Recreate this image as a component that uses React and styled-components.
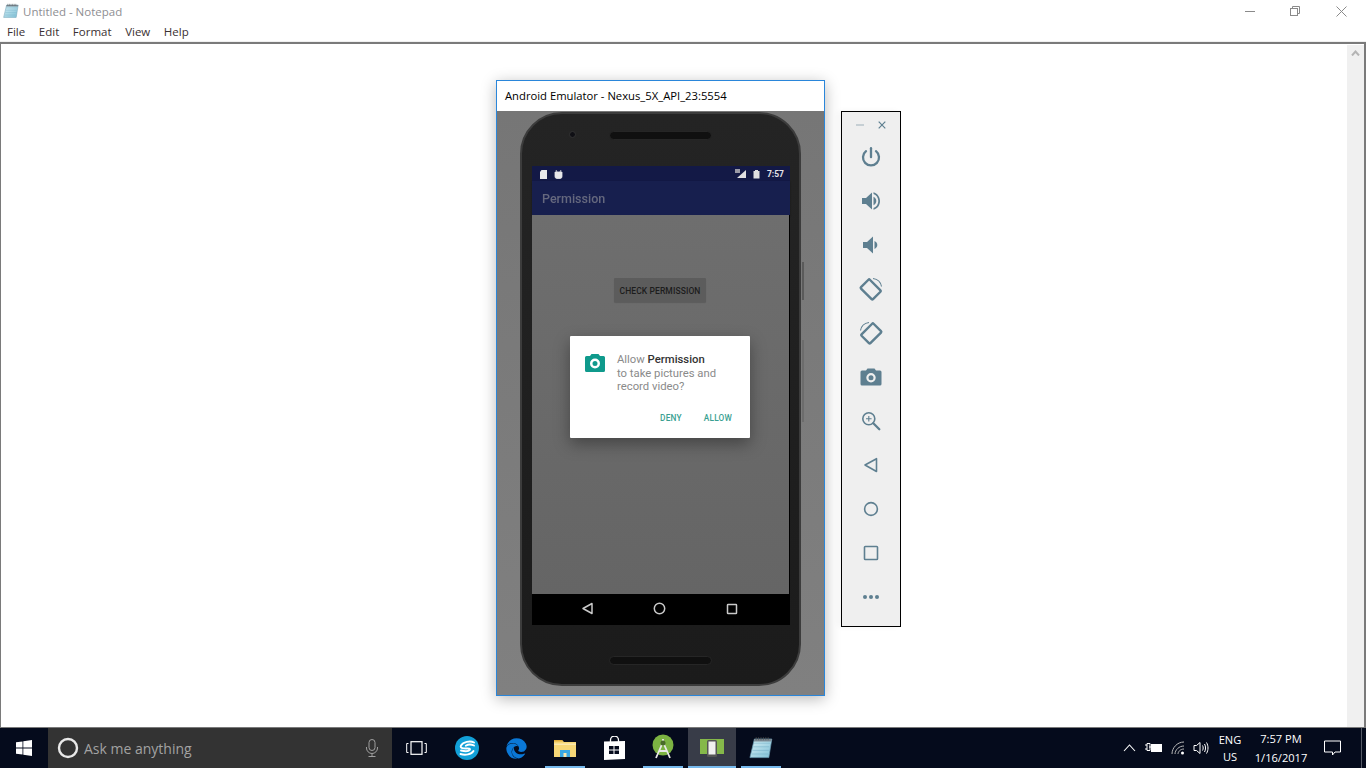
import React from 'react';
import styled, { createGlobalStyle } from 'styled-components';
import { FaEdge } from 'react-icons/fa';

const Global = createGlobalStyle`
  html, body { margin: 0; padding: 0; background: #fff; overflow: hidden; }
  * { box-sizing: border-box; }
  #root { width: 1366px; height: 768px; }
`;

const Page = styled.div`
  width: 1366px; height: 768px; display: flex; flex-direction: column;
  font-family: "Open Sans", "Noto Sans", sans-serif; background: #fff; overflow: hidden;
`;
const TitleBar = styled.div`
  height: 22px; display: flex; align-items: center; padding-left: 3px; flex: none;
`;
const TitleText = styled.span`
  font-size: 11.5px; color: #8e8e92; margin-left: 4px; line-height: 22px; position: relative; top: 1px;
`;
const WindowButtons = styled.div`margin-left: auto; display: flex; align-items: center; height: 22px;`;
const WinBtn = styled.div`
  width: ${p => p.$w}px; height: 22px; display: flex; align-items: center; justify-content: center;
`;
const MenuBar = styled.div`
  height: 19px; display: flex; flex: none; padding-left: 7px; gap: 13.6px; align-items: center;
  font-size: 11.5px; color: #3a3032; background: #fff;
`;
const Gap = styled.div`height: 1px; background: #f0f0f0; flex: none;`;
const Editor = styled.div`
  flex: 1; position: relative; border: 1px solid #7a7a7a; border-top-width: 2px;
  border-right: 2px solid #7a7a7a; display: flex; justify-content: flex-end;
`;
const Scroll = styled.div`
  width: 17px; background: #f0f0f0; display: flex; justify-content: center; padding-top: 5px; margin-top: 1px;
`;

const EmuWindow = styled.div`
  position: absolute; left: 495px; top: 36px; width: 329px; height: 616px; border: 1px solid #2a86da;
  display: flex; flex-direction: column; background: #fff;
  box-shadow: 0 3px 14px rgba(0,0,0,.28);
`;
const EmuTitle = styled.div`
  height: 30px; flex: none; padding: 0 0 2px 8px; display: flex; align-items: center;
  font-size: 11.25px; color: #000;
`;
const EmuBody = styled.div`
  flex: 1; background: linear-gradient(180deg,#767676,#808080); display: flex; justify-content: center; padding: 1px 0 9px 0;
`;
const Phone = styled.div`
  position: relative; width: 281px; height: 574px; margin-left: -1px; border-radius: 42px;
  border: 2px solid #3c3c3c; display: flex; flex-direction: column; align-items: center;
  background: linear-gradient(180deg,#242424,#1b1b1b);
  filter: blur(.3px);
`;
const SideKey = styled.div`
  position: absolute; right: -5px; width: 2px; background: ${p => p.$c}; top: ${p => p.$top}px; height: ${p => p.$h}px;
`;
const Camera = styled.div`
  position: absolute; left: 47px; top: 17px; width: 7px; height: 7px; border-radius: 50%; background: #0f0f14; border: 1px solid #333;
`;
const Speaker = styled.div`
  height: 9px; width: 103px; border-radius: 5px; background: #101010; border: 1px solid #262626; flex: none;
  margin: ${p => p.$m};
`;
const Screen = styled.div`
  width: 258px; height: 459px; flex: none; display: flex; flex-direction: column; position: relative;
  margin-left: 2px;
  font-family: Roboto, sans-serif; background: #000;
`;
const StatusBar = styled.div`
  height: 15px; flex: none; background: #131946; display: flex; align-items: center; padding: 0 6px 0 7px; gap: 6px;
`;
const Clock = styled.span`
  font-size: 8.5px; font-weight: 700; color: #e4e4e8; margin-left: 1px;
`;
const Spacer = styled.div`flex: 1;`;
const AppBar = styled.div`
  height: 34px; flex: none; background: #171f4e; display: flex; align-items: center; padding-left: 10px;
  font-size: 12.5px; font-weight: 500; color: #65687e; box-shadow: 0 1px 2px rgba(0,0,0,.35); position: relative;
`;
const Content = styled.div`
  flex: 1; background: linear-gradient(180deg,#6e6e6e,#656565); display: flex; justify-content: center; align-items: flex-start;
  padding-top: 63px; position: relative; margin-right: 1px;
`;
const CheckBtn = styled.div`
  width: 92px; height: 24px; margin-left: -1px; padding-top: 1px; background: #5c5c5c; border-radius: 1px; display: flex; align-items: center; justify-content: center;
  font-size: 8.5px; font-weight: 500; color: #1d1d1d; letter-spacing: 0.1px; box-shadow: 0 1px 1px rgba(0,0,0,.15);
`;
const Dialog = styled.div`
  position: absolute; left: 38px; top: 121px; width: 180px; height: 102px; background: #fff; border-radius: 1px;
  box-shadow: 0 6px 16px rgba(0,0,0,.35); padding: 18px 0 0 15px; display: flex; flex-direction: column;
`;
const DialogRow = styled.div`display: flex; gap: 12px;`;
const DialogText = styled.div`
  font-size: 11.3px; line-height: 13.5px; color: #8a8a8a; margin-top: -1px;
  strong { font-weight: 500; color: #333; }
`;
const DialogActions = styled.div`
  display: flex; justify-content: flex-end; gap: 22px; padding-right: 18px; margin-top: 19px;
  font-size: 8.3px; font-weight: 500; color: #3a9f92; letter-spacing: 0.2px;
`;
const NavBar = styled.div`
  height: 31px; flex: none; background: #000; display: flex; align-items: center; justify-content: center; padding: 0 3px 2px 0;
`;
const NavBtn = styled.div`width: 72px; display: flex; justify-content: center; align-items: center;`;

const Tools = styled.div`
  position: absolute; left: 840px; top: 67px; width: 60px; height: 516px; border: 1px solid #000; background: #efefef;
  display: flex; flex-direction: column; align-items: center;
  box-shadow: -3px 0 6px rgba(0,0,0,.04);
`;
const ToolsHead = styled.div`
  height: 23px; width: 100%; flex: none; display: flex; align-items: center; justify-content: flex-end; gap: 14px; padding: 3px 14px 0 0;
`;
const ToolBtn = styled.div`
  width: 44px; height: 44px; flex: none; display: flex; align-items: center; justify-content: center;
`;

const Taskbar = styled.div`
  height: 40px; flex: none; background: #050b1c; display: flex; align-items: stretch; color: #fff;
`;
const Start = styled.div`width: 48px; display: flex; align-items: center; justify-content: center; flex: none;`;
const Search = styled.div`
  width: 344px; background: #333; display: flex; align-items: center; padding-left: 9px; flex: none;
`;
const SearchText = styled.span`
  font-size: 14px; color: #a2a2a2; margin-left: 5px;
`;
const MicSlot = styled.div`margin-left: auto; margin-right: 13px; display: flex;`;
const TaskView = styled.div`width: 48px; margin-right: 3px; display: flex; align-items: center; justify-content: center; flex: none;`;
const TaskApp = styled.div`
  width: 48px; margin-right: 1px; flex: none; position: relative; display: flex; align-items: center; justify-content: center;
  background: ${p => (p.$active ? '#383c48' : 'transparent')};
  ${p => p.$open && `&:after { content: ''; position: absolute; bottom: 0; height: 2px; left: ${p.$active ? 0 : 4}px; right: ${p.$active ? 0 : 4}px; background: #76b9ed; }`}
`;
const Tray = styled.div`margin-left: auto; display: flex; align-items: center; padding-right: 11px; border-right: 1px solid #555a66; margin-right: 4px; height: 100%;`;
const TrayIcon = styled.div`width: ${p => p.$w}px; flex: none; display: flex; justify-content: center; align-items: center;`;
const Stack = styled.div`
  width: ${p => p.$w}px; flex: none; display: flex; flex-direction: column; align-items: center; font-size: 11.1px; line-height: ${p => p.$lh}px; color: #fff; white-space: nowrap;
`;

const NotepadIcon = ({ s = 16 }) => (
  <svg width={s} height={s} viewBox="0 0 20 20">
    <defs>
      <linearGradient id="npg" x1="0" y1="0" x2="1" y2="1">
        <stop offset="0" stopColor="#d8f0f6" />
        <stop offset="1" stopColor="#7fc0d6" />
      </linearGradient>
    </defs>
    <path d="M4.500 2.500H19l-2.500 15.500H.8z" fill="url(#npg)" stroke="#6a9cb2" strokeWidth=".6" />
    <path d="M4 6h13.500M3.500 9h13.500M3 12h13.500M2.500 15h13.500" stroke="#6ba8c2" strokeWidth=".4" />
    <path d="M4.500 2.500H19l-.4 2H4.100z" fill="#7b8a94" />
    <path d="M6 1v2.500M8 1v2.500M10 1v2.500M12 1v2.500M14 1v2.500M16 1v2.500" stroke="#555" strokeWidth=".6" />
  </svg>
);

const Gray = '#5e7f90';

const ICONS = [
  <svg key="p" width="24" height="24" viewBox="0 0 24 24" fill="none" stroke={Gray} strokeWidth="2.300" strokeLinecap="round"><path d="M12 3.200v9" /><path d="M7 6.200a8 8 0 1 0 10 0" /></svg>,
  <svg key="vu" width="24" height="24" viewBox="0 0 24 24" fill={Gray}><path d="M3 9v6h4l6 5.500V3.500L7 9z" /><path d="M14.500 7.800c1.700.8 2.800 2.300 2.800 4.200s-1.100 3.400-2.800 4.200zM14.500 3.200c3.800 1 6.500 4.500 6.500 8.800s-2.700 7.800-6.500 8.800v-1.800c2.800-.9 4.800-3.700 4.800-7s-2-6.100-4.800-7z" /></svg>,
  <svg key="vd" width="24" height="24" viewBox="0 0 24 24" fill={Gray}><path d="M4 9v6h4l6 5.500V3.500L8 9z" /><path d="M15.500 8c1.700.8 2.800 2.200 2.800 4s-1.100 3.200-2.800 4z" /></svg>,
  <svg key="r1" width="26" height="26" viewBox="0 0 26 26" fill="none" stroke={Gray}><rect x="6.500" y="5" width="12.500" height="17" rx="1" strokeWidth="2.400" transform="rotate(-45 12.700 13.500)" /><path d="M15 2.500c4.500.6 7.800 3.900 8.500 8" strokeWidth="1.100" /></svg>,
  <svg key="r2" width="26" height="26" viewBox="0 0 26 26" fill="none" stroke={Gray}><rect x="7" y="5" width="12.500" height="17" rx="1" strokeWidth="2.400" transform="rotate(45 13.300 13.500)" /><path d="M11 2.500c-4.500.6-7.800 3.900-8.500 8" strokeWidth="1.100" /></svg>,
  <svg key="c" width="22" height="20" viewBox="0 0 22 20"><path fillRule="evenodd" fill={Gray} d="M7.500 1.500h7L16 3.500h4a1.500 1.500 0 0 1 1.500 1.500v12a1.500 1.500 0 0 1-1.500 1.500H2A1.500 1.500 0 0 1 .5 17V5A1.500 1.500 0 0 1 2 3.500h4zM11 6a4.700 4.700 0 1 0 0 9.400A4.700 4.700 0 0 0 11 6zM11 8.200a2.500 2.500 0 1 1 0 5 2.500 2.500 0 0 1 0-5z" /></svg>,
  <svg key="z" width="20" height="20" viewBox="0 0 20 20" fill="none" stroke={Gray}><circle cx="7.800" cy="7.800" r="6" strokeWidth="1.600" /><path d="M12.300 12.300l6 6" strokeWidth="2.300" strokeLinecap="round" /><path d="M5 7.800h5.600M7.800 5v5.600" strokeWidth="1.100" /></svg>,
  <svg key="b" width="16" height="16" viewBox="0 0 16 16" fill="none" stroke={Gray} strokeWidth="1.600" strokeLinejoin="round"><path d="M13.500 1.700v12.800L2 8z" /></svg>,
  <svg key="h" width="16" height="16" viewBox="0 0 16 16" fill="none" stroke={Gray} strokeWidth="1.600"><circle cx="8" cy="8" r="6.400" /></svg>,
  <svg key="s" width="16" height="16" viewBox="0 0 16 16" fill="none" stroke={Gray} strokeWidth="1.600"><rect x="1.500" y="1.500" width="13" height="13" rx=".8" /></svg>,
  <svg key="m" width="18" height="6" viewBox="0 0 18 6" fill={Gray}><circle cx="3" cy="3" r="2" /><circle cx="9" cy="3" r="2" /><circle cx="15" cy="3" r="2" /></svg>,
];

export default function App() {
  return (
    <Page>
      <Global />
      <TitleBar>
        <NotepadIcon />
        <TitleText>Untitled - Notepad</TitleText>
        <WindowButtons>
          <WinBtn $w={48}><svg width="10" height="10" viewBox="0 0 10 10"><path d="M0 5.500h10" stroke="#8a8a8a" /></svg></WinBtn>
          <WinBtn $w={42}><svg width="10" height="10" viewBox="0 0 10 10" fill="none" stroke="#8a8a8a"><rect x=".5" y="2.500" width="7" height="7" /><path d="M2.500 2.500V.5h7v7h-2" /></svg></WinBtn>
          <WinBtn $w={50}><svg width="11" height="11" viewBox="0 0 11 11" stroke="#8a8a8a"><path d="M.5.5l10 10M10.500.5l-10 10" /></svg></WinBtn>
        </WindowButtons>
      </TitleBar>
      <MenuBar>
        <span>File</span><span>Edit</span><span>Format</span><span>View</span><span>Help</span>
      </MenuBar>
      <Gap />
      <Editor>
        <Scroll>
          <svg width="9" height="6" viewBox="0 0 9 6" fill="none" stroke="#b4b4b4" strokeWidth="2"><path d="M1 5.500l3.500-4 3.500 4" /></svg>
        </Scroll>
        <EmuWindow>
          <EmuTitle>Android Emulator - Nexus_5X_API_23:5554</EmuTitle>
          <EmuBody>
            <Phone>
              <SideKey $top={148} $h={38} $c="#5a5a5a" />
              <SideKey $top={226} $h={82} $c="#6c6c6c" />
              <Camera />
              <Speaker $m="17px 0 26px 0" />
              <Screen>
                <StatusBar>
                  <svg width="9" height="10" viewBox="0 0 9 10" fill="#e8e8ea"><path d="M2.500 1H8v9H1V3z" /></svg>
                  <svg width="9" height="10" viewBox="0 0 9 10" fill="#e8e8ea"><path d="M1 3h7v4.500a2 2 0 0 1-2 2H3a2 2 0 0 1-2-2zM2 1l1 2M7 1L6 3" stroke="#e8e8ea" strokeWidth=".8" /></svg>
                  <Spacer />
                  <svg width="12" height="10" viewBox="0 0 12 10"><path d="M11 1v8H2z" fill="#e0e0e2" /><path d="M0 0h5v4H0z" fill="#9a9aa6" /></svg>
                  <svg width="7" height="10" viewBox="0 0 7 10" fill="#e0e0e2"><path d="M2 1h3v1h1.500v7.500h-6V2H2z" /></svg>
                  <Clock>7:57</Clock>
                </StatusBar>
                <AppBar>Permission</AppBar>
                <Content>
                  <CheckBtn>CHECK PERMISSION</CheckBtn>
                  <Dialog>
                    <DialogRow>
                      <svg width="20" height="18" viewBox="0 0 20 18" style={{ flex: 'none' }}><path fillRule="evenodd" fill="#0f9a8c" d="M6.500 0h7L15 2h3.500A1.500 1.500 0 0 1 20 3.500V16.500A1.500 1.500 0 0 1 18.500 18H1.500A1.500 1.500 0 0 1 0 16.500V3.500A1.500 1.500 0 0 1 1.500 2H5zM10 4.500a5 5 0 1 0 0 10 5 5 0 0 0 0-10zM10 7a2.500 2.500 0 1 1 0 5 2.500 2.500 0 0 1 0-5z" /></svg>
                      <DialogText>
                        Allow <strong>Permission</strong><br />to take pictures and<br />record video?
                      </DialogText>
                    </DialogRow>
                    <DialogActions><span>DENY</span><span>ALLOW</span></DialogActions>
                  </Dialog>
                </Content>
                <NavBar>
                  <NavBtn><svg width="13" height="13" viewBox="0 0 13 13" fill="none" stroke="#c9c9c9" strokeWidth="1.500" strokeLinejoin="round"><path d="M11 1.500v10L2 6.500z" /></svg></NavBtn>
                  <NavBtn><svg width="13" height="13" viewBox="0 0 13 13" fill="none" stroke="#c9c9c9" strokeWidth="1.500"><circle cx="6.500" cy="6.500" r="5.200" /></svg></NavBtn>
                  <NavBtn><svg width="12" height="12" viewBox="0 0 12 12" fill="none" stroke="#c9c9c9" strokeWidth="1.500"><rect x="1.500" y="1.500" width="9" height="9" rx=".6" /></svg></NavBtn>
                </NavBar>
              </Screen>
              <Speaker $m="31px 0 0 0" />
            </Phone>
          </EmuBody>
        </EmuWindow>
        <Tools>
          <ToolsHead>
            <svg width="8" height="8" viewBox="0 0 8 8"><path d="M0 4h8" stroke="#a9b9c2" strokeWidth="1.200" /></svg>
            <svg width="8" height="8" viewBox="0 0 8 8"><path d="M.7.700l6.600 6.600M7.300.700L.7 7.300" stroke={Gray} strokeWidth="1.200" /></svg>
          </ToolsHead>
          {ICONS.map((ic, i) => <ToolBtn key={i}>{ic}</ToolBtn>)}
        </Tools>
      </Editor>
      <Taskbar>
        <Start>
          <svg width="16" height="16" viewBox="0 0 16 16" fill="#fff"><path d="M0 2.300l6.500-.9v6.200H0zM7.300 1.300L16 0v7.600H7.300zM0 8.400h6.500v6.200L0 13.700zM7.300 8.400H16V16l-8.700-1.300z" /></svg>
        </Start>
        <Search>
          <svg width="22" height="22" viewBox="0 0 22 22" fill="none"><circle cx="11" cy="11" r="9" stroke="#e8e8e8" strokeWidth="2.400" /></svg>
          <SearchText>Ask me anything</SearchText>
          <MicSlot>
            <svg width="14" height="18" viewBox="0 0 14 18" fill="none" stroke="#a0a0a0"><rect x="4" y=".5" width="6" height="11" rx="3" /><path d="M1.500 8v1a5.500 5.500 0 0 0 11 0V8M7 14.500V17M3.500 17.500h7" /></svg>
          </MicSlot>
        </Search>
        <TaskView>
          <svg width="21" height="14" viewBox="0 0 21 14" fill="none" stroke="#fff"><rect x="5" y=".7" width="11" height="12.600" strokeWidth="1.200" /><path d="M2.500 2.500H.7v9h1.800M18.500 2.500h1.800v9h-1.800" strokeWidth="1" /></svg>
        </TaskView>
        <TaskApp>
          <svg width="24" height="24" viewBox="0 0 24 24" fill="none"><circle cx="12" cy="12" r="12" fill="#12a0d8" /><path d="M19 6.500C15 4.500 8 6 6 9.500c-1.500 3 3 3.200 6 3 2-.1 3.500.3 2.800 1.300-1 1.300-4.800 1.700-8.800.7" stroke="#fff" strokeWidth="1.900" strokeLinecap="round" /><path d="M19 9.500c-2.500-1.200-6-1.200-8.200.2M5.500 18c4.500 1.500 11 .6 13-3" stroke="#fff" strokeWidth="1.900" strokeLinecap="round" /></svg>
        </TaskApp>
        <TaskApp>
          <FaEdge size={21} color="#0a78d7" />
        </TaskApp>
        <TaskApp $open>
          <svg width="22" height="18" viewBox="0 0 22 18"><path d="M0 1h8l2 2h12v15H0z" fill="#f6d776" /><path d="M0 1h8l1 1.500H0z" fill="#e0ad3a" /><path d="M0 4.500h22V6H0z" fill="#fbe8ae" /><path d="M6 11h10v7H6z" fill="#3aa9e6" /><path d="M9.500 14h3v4h-3z" fill="#fbe8ae" /></svg>
        </TaskApp>
        <TaskApp>
          <svg width="21" height="24" viewBox="0 0 21 24" fill="none"><path d="M6.500 6V4a4 4 0 0 1 8 0v2" stroke="#fff" strokeWidth="1.300" /><path fillRule="evenodd" fill="#fff" d="M0 5.500l21-.5v18L0 24zM5 10v3.500h4.500V10zM10.500 10v3.500H15V10zM5 14.500V18h4.500v-3.500zM10.500 14.500V18H15v-3.500z" /></svg>
        </TaskApp>
        <TaskApp $open>
          <svg width="24" height="28" viewBox="0 0 24 28" fill="none"><circle cx="12" cy="11" r="10.500" fill="#7cb342" /><path d="M12 5v3M5 24l7-16 7 16M8 17h8" stroke="#e8e8e8" strokeWidth="1.800" /><circle cx="12" cy="9" r="2.500" fill="#4a6a2a" /></svg>
        </TaskApp>
        <TaskApp $open $active>
          <svg width="24" height="18" viewBox="0 0 24 18"><path d="M0 0h24v15H0z" fill="#85b84a" /><rect x="7" y="1" width="10" height="17" rx="1.500" fill="#555" /><rect x="8.500" y="2.500" width="7" height="13" fill="#f0f0f0" /></svg>
        </TaskApp>
        <TaskApp $open><NotepadIcon s={24} /></TaskApp>
        <Tray>
          <TrayIcon $w={22}><svg width="13" height="8" viewBox="0 0 13 8" fill="none" stroke="#fff" strokeWidth="1.100"><path d="M1 7l5.500-6L12 7" /></svg></TrayIcon>
          <TrayIcon $w={26}><svg width="17" height="12" viewBox="0 0 17 12"><path d="M0 3h2M0 7h2M2 1.500h3v7H2zM4 5h2" stroke="#fff" fill="none" /><rect x="6" y="2" width="11" height="8" fill="#fff" /></svg></TrayIcon>
          <TrayIcon $w={24}><svg width="14" height="14" viewBox="0 0 14 14" fill="none" stroke="#b8b8b8"><path d="M1 13C1 7 6 1 13 1M4 13c0-4 4-8 9-8M7 13c0-2 2-5 6-5" /><circle cx="11.500" cy="12" r="1.500" fill="#fff" stroke="none" /></svg></TrayIcon>
          <TrayIcon $w={22}><svg width="17" height="14" viewBox="0 0 17 14" fill="none" stroke="#fff"><path d="M1 4.500h2.500L7 1.500v11l-3.500-3H1zM9.500 4.500c.9 1.500.9 3.500 0 5M11.500 3c1.400 2.500 1.400 5.500 0 8M13.500 1.500c2 3.500 2 7.500 0 11" /></svg></TrayIcon>
          <Stack $w={36} $lh={17}><span>ENG</span><span>US</span></Stack>
          <Stack $w={66} $lh={19}><span>7:57 PM</span><span>1/16/2017</span></Stack>
          <TrayIcon $w={36}><svg width="17" height="16" viewBox="0 0 17 16" fill="none" stroke="#fff"><path d="M.5 1h16v11h-5.500l-2.500 3v-3h-8z" /></svg></TrayIcon>
        </Tray>
      </Taskbar>
    </Page>
  );
}
